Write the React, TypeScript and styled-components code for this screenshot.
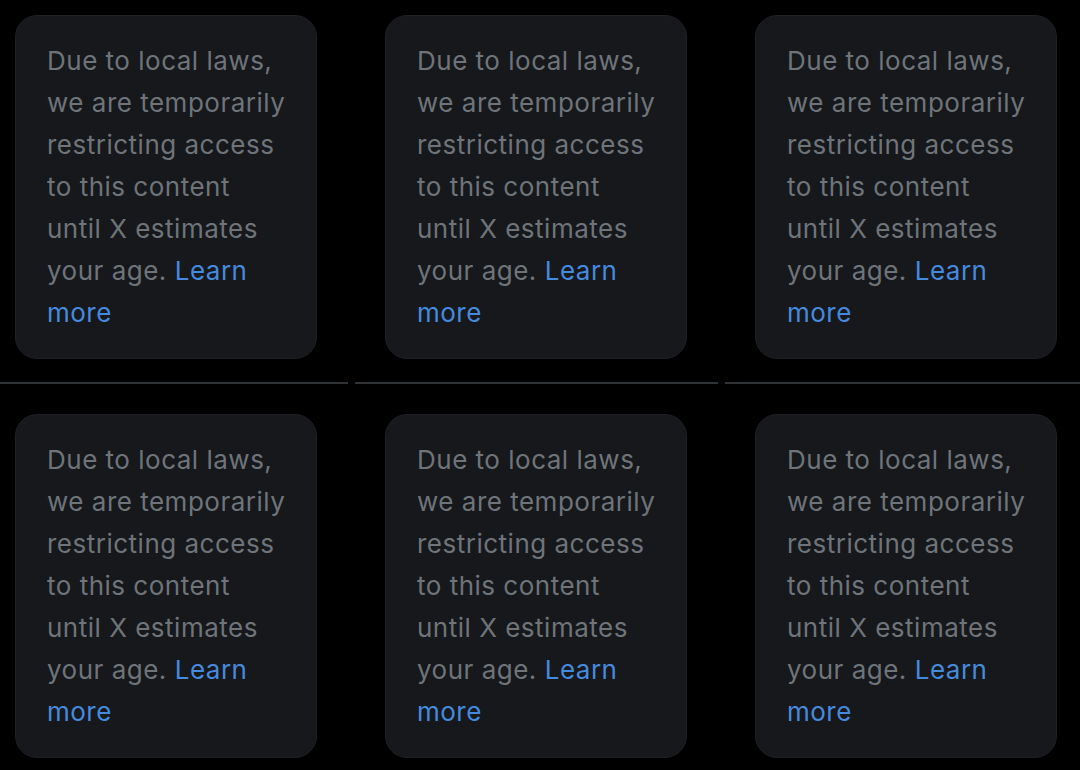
import styled, { createGlobalStyle } from "styled-components";

const GlobalStyle = createGlobalStyle`
  html, body {
    margin: 0;
    padding: 0;
    background: #000000;
    overflow: hidden;
  }
`;

const Page = styled.div`
  width: 1080px;
  height: 770px;
  overflow: hidden;
  background: #000000;
`;

const Grid = styled.div`
  display: grid;
  grid-template-columns: repeat(3, 363px);
  column-gap: 7px;
  margin: -15px 0 0 -15px;
`;

const Cell = styled.div`
  padding: 30px 31px 23px 30px;
  border-bottom: 2px solid #2f3336;
`;

const Card = styled.div`
  box-sizing: border-box;
  width: 302px;
  padding: 24px 20px 24px 31px;
  background: #16181c;
  border: 1px solid #1e2024;
  border-radius: 22px;
`;

const Notice = styled.p`
  margin: 0;
  width: 242px;
  font-family: Inter, "Open Sans", sans-serif;
  font-size: 26px;
  letter-spacing: 0.5px;
  line-height: 42px;
  color: #6f747a;
`;

const LearnMore = styled.a`
  color: #468ade;
  text-decoration: none;
`;

const cards = [1, 2, 3, 4, 5, 6];

const App: React.FC = () => {
  return (
    <Page>
      <GlobalStyle />
      <Grid>
        {cards.map((id) => (
          <Cell key={id}>
            <Card>
              <Notice>
                Due to local laws, we are temporarily restricting access to this
                content until X estimates your age.{" "}
                <LearnMore href="#">Learn more</LearnMore>
              </Notice>
            </Card>
          </Cell>
        ))}
      </Grid>
    </Page>
  );
};

export default App;
